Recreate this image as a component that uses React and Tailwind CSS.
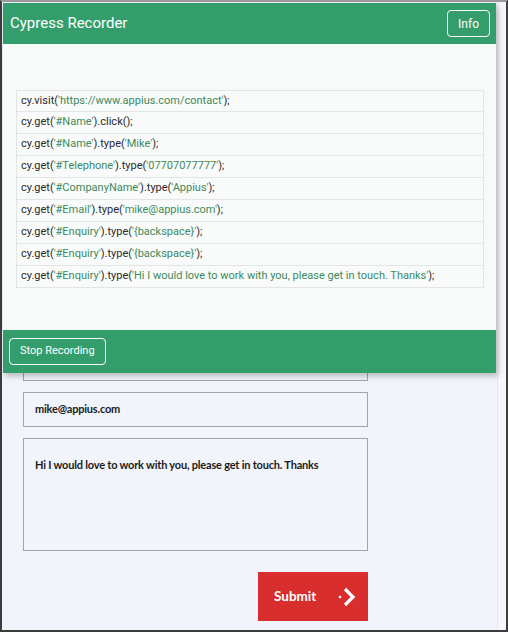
import React from "react";

const lines = [
  [["cy.visit(", 0], ["'https://www.appius.com/contact'", 1], [");", 0]],
  [["cy.get(", 0], ["'#Name'", 1], [").click();", 0]],
  [["cy.get(", 0], ["'#Name'", 1], [").type(", 0], ["'Mike'", 1], [");", 0]],
  [["cy.get(", 0], ["'#Telephone'", 1], [").type(", 0], ["'07707077777'", 1], [");", 0]],
  [["cy.get(", 0], ["'#CompanyName'", 1], [").type(", 0], ["'Appius'", 1], [");", 0]],
  [["cy.get(", 0], ["'#Email'", 1], [").type(", 0], ["'mike@appius.com'", 1], [");", 0]],
  [["cy.get(", 0], ["'#Enquiry'", 1], [").type(", 0], ["'{backspace}'", 1], [");", 0]],
  [["cy.get(", 0], ["'#Enquiry'", 1], [").type(", 0], ["'{backspace}'", 1], [");", 0]],
  [["cy.get(", 0], ["'#Enquiry'", 1], [").type(", 0], ["'Hi I would love to work with you, please get in touch. Thanks'", 1], [");", 0]],
];

function Input({ value }) {
  return (
    <div className="w-[345px] h-[35px] border border-[#a3a4a8] flex items-center px-[11px] text-[11px] tracking-[-0.2px] font-bold text-[#1b1b1b]">
      {value}
    </div>
  );
}

export default function App() {
  return (
    <div className="relative w-[508px] h-[632px] overflow-hidden bg-[#f2f4fb] border-2 border-[#3c3c3c] border-t-[#9a9a9a]" style={{ fontFamily: "Lato, 'Open Sans', sans-serif" }}>
      <div className="absolute right-0 top-0 bottom-0 w-[9px] bg-[#f6f7fa] border-l border-[#e4e6ec]" />
      {/* Form behind */}
      <div className="flex flex-col gap-[11px] pl-[21px] pt-[114px]">
        <Input value="Mike" />
        <Input value="07707077777" />
        <Input value="Appius" />
        <Input value="" />
        <Input value="" />
        <Input value="" />
        <Input value="mike@appius.com" />
        <div className="w-[345px] h-[113px] border border-[#a3a4a8] px-[11px] pt-[18px] text-[11px] tracking-[-0.2px] font-bold text-[#1b1b1b]">
          Hi I would love to work with you, please get in touch. Thanks
        </div>
        <div className="flex justify-end w-[345px] mt-[10px]">
          <div className="w-[110px] h-[49px] bg-[#d82e2e] flex items-center text-white text-[13.5px] font-bold">
            <span className="ml-[16px]">Submit</span>
            <svg className="ml-[22px]" width="18" height="22" viewBox="0 0 18 22">
              <circle cx="2" cy="11" r="1.3" fill="#fff" />
              <path d="M7 3 L15 11 L7 19" stroke="#fff" strokeWidth="3.2" fill="none" strokeLinejoin="miter" />
            </svg>
          </div>
        </div>
      </div>

      {/* Recorder overlay */}
      <div className="absolute left-[1px] top-[1px] w-[493px] flex flex-col bg-[#f8f9f9] shadow-[2px_3px_6px_rgba(0,0,0,0.25)]" style={{ fontFamily: "Roboto, 'Liberation Sans', sans-serif" }}>
        <div className="h-[41px] bg-[#339e6c] flex items-center justify-between pl-[7px] pr-[6px]">
          <span className="text-white text-[15px]">Cypress Recorder</span>
          <div className="h-[27px] px-[10px] flex items-center border border-white rounded-[4px] text-white text-[12px]">Info</div>
        </div>
        <div className="h-[286px] pt-[46px] px-[13px]">
          <div className="w-[468px] flex flex-col">
            {lines.map((parts, i) => (
              <div key={i} className={"h-[22px] flex items-center px-[4px] border border-[#e3e5e5] bg-[#f9fafa] text-[11px] whitespace-nowrap " + (i > 0 ? "border-t-0" : "")}>
                {parts.map(([t, s], j) => (
                  <span key={j} className={s ? "text-[#3d8a5d]" : "text-[#2a2a2a]"}>{t}</span>
                ))}
              </div>
            ))}
          </div>
        </div>
        <div className="h-[43px] bg-[#339e6c] flex items-center pl-[6px]">
          <div className="h-[27px] px-[10px] flex items-center border border-white rounded-[4px] text-white text-[11px]">Stop Recording</div>
        </div>
      </div>
    </div>
  );
}
